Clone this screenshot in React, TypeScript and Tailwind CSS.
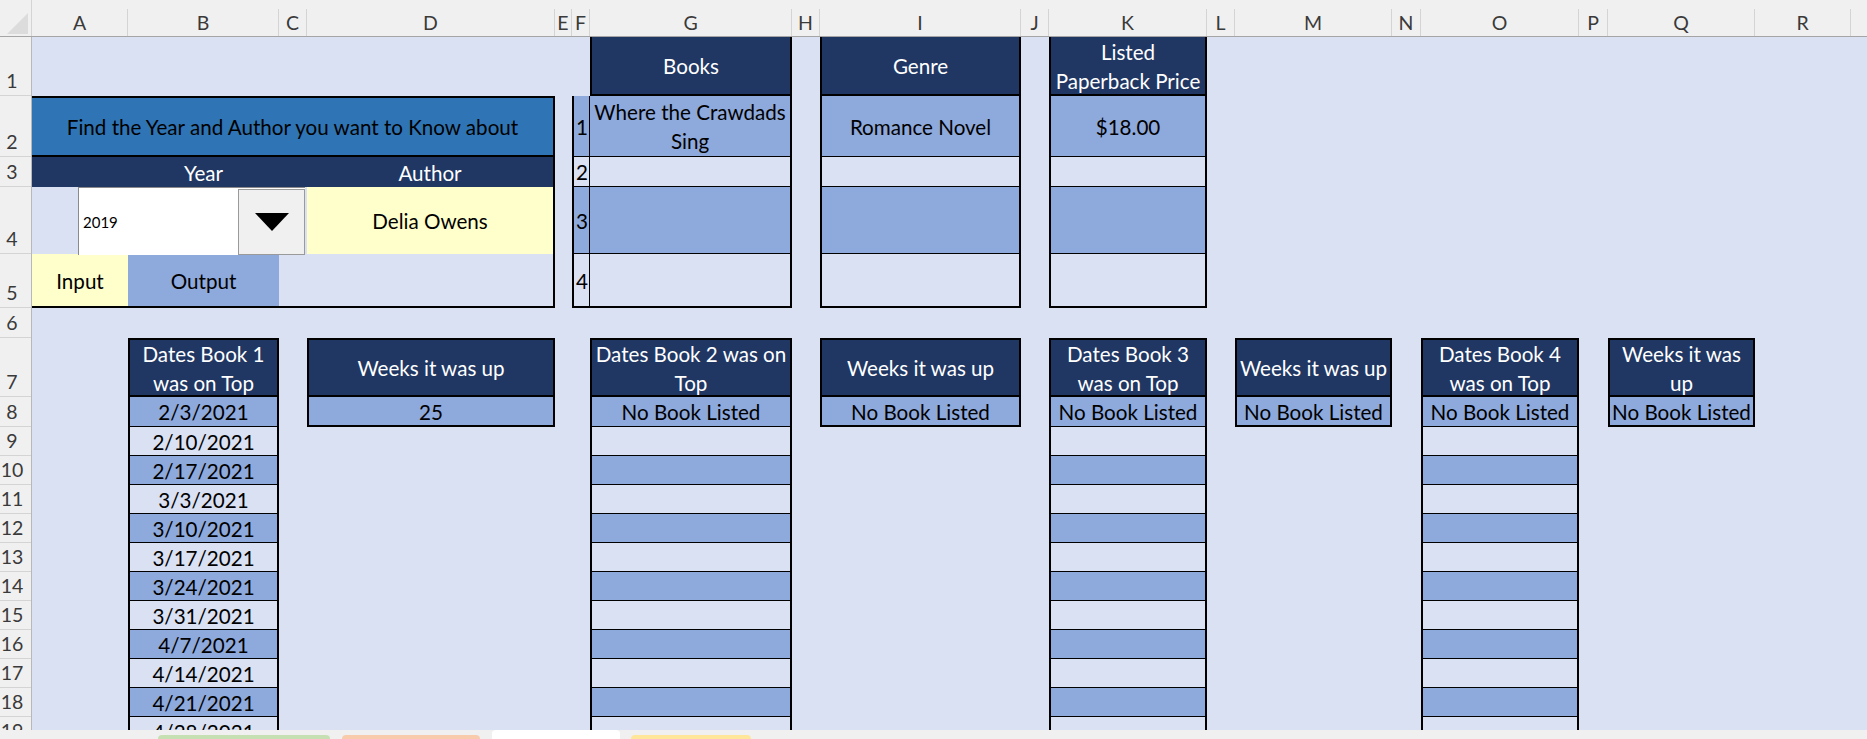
import React from "react";

const COLS: [string, string][] = [
  ["A", "w-[96px]"],
  ["B", "w-[151px]"],
  ["C", "w-[28px]"],
  ["D", "w-[248px]"],
  ["E", "w-[17px]"],
  ["F", "w-[18px]"],
  ["G", "w-[202px]"],
  ["H", "w-[28px]"],
  ["I", "w-[201px]"],
  ["J", "w-[28px]"],
  ["K", "w-[158px]"],
  ["L", "w-[28px]"],
  ["M", "w-[157px]"],
  ["N", "w-[29px]"],
  ["O", "w-[158px]"],
  ["P", "w-[29px]"],
  ["Q", "w-[147px]"],
  ["R", "w-[96px]"],
];

const ROWS: [string, string][] = [
  ["1", "h-[59px]"],
  ["2", "h-[61px]"],
  ["3", "h-[30px]"],
  ["4", "h-[67px]"],
  ["5", "h-[54px]"],
  ["6", "h-[30px]"],
  ["7", "h-[59px]"],
  ["8", "h-[30px]"],
  ["9", "h-[29px]"],
  ["10", "h-[29px]"],
  ["11", "h-[29px]"],
  ["12", "h-[29px]"],
  ["13", "h-[29px]"],
  ["14", "h-[29px]"],
  ["15", "h-[29px]"],
  ["16", "h-[29px]"],
  ["17", "h-[29px]"],
  ["18", "h-[29px]"],
  ["19", "h-[29px]"],
];

const DATES = [
  "2/3/2021",
  "2/10/2021",
  "2/17/2021",
  "3/3/2021",
  "3/10/2021",
  "3/17/2021",
  "3/24/2021",
  "3/31/2021",
  "4/7/2021",
  "4/14/2021",
  "4/21/2021",
  "4/28/2021",
];

function ColumnHeader() {
  return (
    <div className="flex h-[37px] bg-[#f0f0f0] border-b border-[#a5a5a5] shrink-0">
      <div className="w-[32px] h-full relative border-r border-[#d4d4d4]">
        <svg className="absolute left-[7px] top-[13px]" width="21" height="21" viewBox="0 0 21 21">
          <polygon points="21,0 21,21 0,21" fill="#dcdcdc" />
        </svg>
      </div>
      {COLS.map(([l, w]) => (
        <div key={l} className={`${w} h-full pt-[9px] shrink-0`}>
          <div className="h-full border-r border-[#d4d4d4] flex items-center justify-center text-[19.5px] leading-none text-[#3a3a3a]">
            {l}
          </div>
        </div>
      ))}
      <div className="flex-1" />
    </div>
  );
}

function RowHeader() {
  return (
    <div className="w-[32px] shrink-0 bg-[#f0f0f0] border-r border-[#b8b8b8] flex flex-col">
      {ROWS.map(([n, h]) => (
        <div
          key={n}
          className={`${h} shrink-0 border-b border-[#d4d4d4] flex items-end justify-center pr-[7px] pb-[3px] text-[19.5px] leading-[22px] text-[#3a3a3a]`}
        >
          {n}
        </div>
      ))}
    </div>
  );
}

function Lines({ lines }: { lines: string[] }) {
  return (
    <div className="flex flex-col items-center pt-[2px] leading-[29px] whitespace-nowrap">
      {lines.map((t) => (
        <span key={t}>{t}</span>
      ))}
    </div>
  );
}

function Block1() {
  return (
    <div className="w-[523px] shrink-0 flex flex-col">
      <div className="h-[59px]" />
      <div className="h-[212px] border-2 border-l-0 border-black flex flex-col">
        <div className="h-[59px] pt-[2px] bg-[#2f75b5] border-b-2 border-black flex items-center justify-center text-black">
          Find the Year and Author you want to Know about
        </div>
        <div className="h-[30px] pt-[2px] bg-[#203764] flex text-white">
          <div className="w-[96px]" />
          <div className="w-[151px] flex items-center justify-center">Year</div>
          <div className="w-[28px]" />
          <div className="flex-1 flex items-center justify-center">Author</div>
        </div>
        <div className="h-[67px] relative flex">
          <div className="w-[275px]" />
          <div className="flex-1 pt-[2px] bg-[#ffffcc] flex items-center justify-center text-black">Delia Owens</div>
          <div className="absolute left-[46px] top-0 w-[227px] h-[68px] flex bg-white border-l border-t border-[#8a8a8a]">
            <div className="flex-1 flex items-center pl-[4px] pt-[1px] text-[15px] text-black">2019</div>
            <div className="w-[67px] h-[66px] mt-[1px] bg-[#f0f0f0] border border-[#9a9a9a] flex items-center justify-center">
              <svg width="34" height="18" viewBox="0 0 34 18">
                <polygon points="0,0 34,0 17,18" fill="#000" />
              </svg>
            </div>
          </div>
        </div>
        <div className="h-[52px] pt-[2px] flex text-black">
          <div className="w-[96px] -mt-[2px] pt-[2px] bg-[#ffffcc] flex items-center justify-center">Input</div>
          <div className="w-[151px] -mt-[2px] pt-[2px] bg-[#8ea9db] flex items-center justify-center">Output</div>
          <div className="flex-1" />
        </div>
      </div>
    </div>
  );
}

function NumCell({ n }: { n: string }) {
  return <div className="w-[16px] border-r border-black flex items-center pl-[2px] pt-[2px]">{n}</div>;
}

function BooksBlock() {
  return (
    <div className="w-[220px] shrink-0 flex flex-col">
      <div className="h-[59px] flex">
        <div className="w-[18px]" />
        <div className="w-[202px] pt-[2px] bg-[#203764] border-x-2 border-b-2 border-black flex items-center justify-center text-white">
          Books
        </div>
      </div>
      <div className="h-[212px] border-2 border-t-0 border-black flex flex-col text-black">
        <div className="h-[61px] flex bg-[#8ea9db] border-b border-black">
          <NumCell n="1" />
          <div className="flex-1 flex items-center justify-center">
            <Lines lines={["Where the Crawdads", "Sing"]} />
          </div>
        </div>
        <div className="h-[30px] flex border-b border-black">
          <NumCell n="2" />
          <div className="flex-1" />
        </div>
        <div className="h-[67px] flex bg-[#8ea9db] border-b border-black">
          <NumCell n="3" />
          <div className="flex-1" />
        </div>
        <div className="h-[52px] flex">
          <NumCell n="4" />
          <div className="flex-1" />
        </div>
      </div>
    </div>
  );
}

function InfoBlock({ width, header, value }: { width: string; header: string[]; value: string }) {
  return (
    <div className={`${width} shrink-0 flex flex-col`}>
      <div className="h-[59px] bg-[#203764] border-x-2 border-b-2 border-black flex items-center justify-center text-white">
        <Lines lines={header} />
      </div>
      <div className="h-[212px] border-2 border-t-0 border-black flex flex-col text-black">
        <div className="h-[61px] pt-[2px] bg-[#8ea9db] border-b border-black flex items-center justify-center">{value}</div>
        <div className="h-[30px] border-b border-black" />
        <div className="h-[67px] bg-[#8ea9db] border-b border-black" />
        <div className="h-[52px]" />
      </div>
    </div>
  );
}

function ListBlock({ width, header, items }: { width: string; header: string[]; items: string[] }) {
  const rows = Array.from({ length: 12 }, (_, i) => items[i] ?? "");
  return (
    <div className={`${width} shrink-0 flex flex-col border-x-2 border-t-2 border-black`}>
      <div className="h-[57px] shrink-0 bg-[#203764] border-b-2 border-black flex items-center justify-center text-white">
        <Lines lines={header} />
      </div>
      {rows.map((t, i) => (
        <div
          key={i}
          className={`${i === 0 ? "h-[30px]" : "h-[29px]"} shrink-0 pt-[2px] border-b border-black flex items-center justify-center text-black whitespace-nowrap ${
            i % 2 === 0 ? "bg-[#8ea9db]" : "bg-[#d9e1f2]"
          }`}
        >
          {t}
        </div>
      ))}
    </div>
  );
}

function WeeksBlock({ width, header, value }: { width: string; header: string[]; value: string }) {
  return (
    <div className={`${width} shrink-0 h-[89px] flex flex-col border-2 border-black`}>
      <div className="h-[57px] bg-[#203764] border-b-2 border-black flex items-center justify-center text-white">
        <Lines lines={header} />
      </div>
      <div className="h-[28px] pt-[2px] bg-[#8ea9db] flex items-center justify-center text-black whitespace-nowrap">{value}</div>
    </div>
  );
}

function TabBar() {
  return (
    <div className="h-[9px] shrink-0 flex bg-[#f0f0f0]">
      <div className="w-[158px]" />
      <div className="w-[172px] mt-[5px] rounded-t-[6px] bg-[#c6e0b4]" />
      <div className="w-[12px]" />
      <div className="w-[138px] mt-[5px] rounded-t-[6px] bg-[#f8cbad]" />
      <div className="w-[12px]" />
      <div className="w-[128px] bg-white rounded-t-[4px]" />
      <div className="w-[11px]" />
      <div className="w-[120px] mt-[5px] rounded-t-[6px] bg-[#ffe699]" />
      <div className="flex-1" />
    </div>
  );
}

export default function App() {
  return (
    <div className="w-[1867px] h-[739px] overflow-hidden flex flex-col bg-[#f0f0f0] font-[Lato,sans-serif] text-[20.6px]">
      <ColumnHeader />
      <div className="h-[693px] flex overflow-hidden shrink-0">
        <RowHeader />
        <div className="flex-1 bg-[#d9e1f2] flex flex-col">
          <div className="flex h-[271px] shrink-0">
            <Block1 />
            <div className="w-[17px] shrink-0" />
            <BooksBlock />
            <div className="w-[28px] shrink-0" />
            <InfoBlock width="w-[201px]" header={["Genre"]} value="Romance Novel" />
            <div className="w-[28px] shrink-0" />
            <InfoBlock width="w-[158px]" header={["Listed", "Paperback Price"]} value="$18.00" />
            <div className="flex-1" />
          </div>
          <div className="h-[30px] shrink-0" />
          <div className="flex items-start">
            <div className="w-[96px] shrink-0" />
            <ListBlock width="w-[151px]" header={["Dates Book 1", "was on Top"]} items={DATES} />
            <div className="w-[28px] shrink-0" />
            <WeeksBlock width="w-[248px]" header={["Weeks it was up"]} value="25" />
            <div className="w-[35px] shrink-0" />
            <ListBlock width="w-[202px]" header={["Dates Book 2 was on", "Top"]} items={["No Book Listed"]} />
            <div className="w-[28px] shrink-0" />
            <WeeksBlock width="w-[201px]" header={["Weeks it was up"]} value="No Book Listed" />
            <div className="w-[28px] shrink-0" />
            <ListBlock width="w-[158px]" header={["Dates Book 3", "was on Top"]} items={["No Book Listed"]} />
            <div className="w-[28px] shrink-0" />
            <WeeksBlock width="w-[157px]" header={["Weeks it was up"]} value="No Book Listed" />
            <div className="w-[29px] shrink-0" />
            <ListBlock width="w-[158px]" header={["Dates Book 4", "was on Top"]} items={["No Book Listed"]} />
            <div className="w-[29px] shrink-0" />
            <WeeksBlock width="w-[147px]" header={["Weeks it was", "up"]} value="No Book Listed" />
          </div>
        </div>
      </div>
      <TabBar />
    </div>
  );
}
